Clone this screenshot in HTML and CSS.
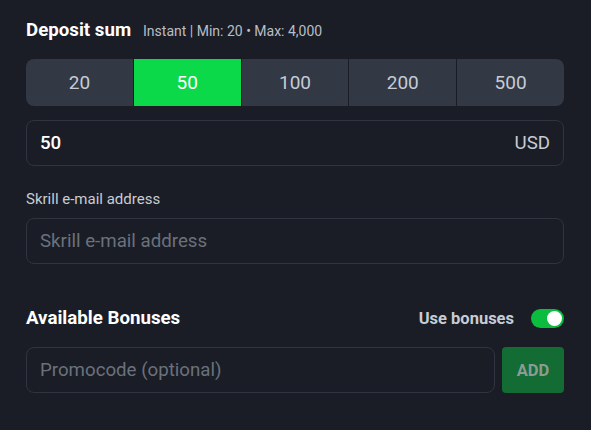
FILE: index.html
```html
<!DOCTYPE html>
<html>
<head>
<meta charset="utf-8">
<link rel="stylesheet" href="styles.css">
</head>
<body>
<div class="panel">
  <div class="head">
    <span class="title">Deposit sum</span>
    <span class="sub">Instant | Min: 20 • Max: 4,000</span>
  </div>
  <div class="amounts">
    <div class="amt">20</div>
    <div class="amt active">50</div>
    <div class="amt">100</div>
    <div class="amt">200</div>
    <div class="amt">500</div>
  </div>
  <div class="field sum">
    <span class="val">50</span>
    <span class="cur">USD</span>
  </div>
  <div class="label">Skrill e-mail address</div>
  <div class="field email">
    <span class="ph">Skrill e-mail address</span>
  </div>
  <div class="bonus-head">
    <span class="title">Available Bonuses</span>
    <div class="use">
      <span class="use-text">Use bonuses</span>
      <span class="toggle"><span class="knob"></span></span>
    </div>
  </div>
  <div class="promo-row">
    <div class="field promo"><span class="ph">Promocode (optional)</span></div>
    <div class="add">ADD</div>
  </div>
</div>
</body>
</html>
```

FILE: styles.css
```css
html, body {
  margin: 0;
  padding: 0;
  background: #1a1d25;
  font-family: Roboto, "Liberation Sans", sans-serif;
}
.panel {
  padding: 19px 27px 0 26px;
}
.head {
  display: flex;
  align-items: baseline;
  gap: 12px;
  height: 24px;
}
.title {
  color: #ffffff;
  font-weight: 700;
  font-size: 18.7px;
}
.sub {
  color: #b8bec8;
  font-size: 14px;
}
.amounts {
  margin-top: 16px;
  display: flex;
  gap: 1px;
  height: 47px;
  border-radius: 8px;
  overflow: hidden;
  background: #1a1d25;
}
.amt {
  flex: 1;
  background: #323844;
  color: #c6ccd6;
  font-size: 19px;
  display: flex;
  align-items: center;
  justify-content: center;
}
.amt.active {
  background: #0cd94a;
  color: #ffffff;
}
.field {
  box-sizing: border-box;
  height: 46px;
  border: 1px solid #2f3440;
  border-radius: 8px;
  display: flex;
  align-items: center;
  padding: 0 13px;
  background: #1a1d25;
}
.sum {
  margin-top: 14px;
  justify-content: space-between;
}
.val {
  color: #ffffff;
  font-size: 18.7px;
  font-weight: 500;
}
.cur {
  color: #c6ccd6;
  font-size: 18.7px;
}
.label {
  margin-top: 24px;
  color: #c8ccd4;
  font-size: 15px;
  height: 20px;
}
.email {
  margin-top: 8px;
}
.ph {
  color: #6b717c;
  font-size: 18.7px;
}
.bonus-head {
  margin-top: 43px;
  display: flex;
  justify-content: space-between;
  align-items: center;
  height: 22px;
}
.use {
  display: flex;
  align-items: center;
  gap: 17px;
}
.use-text {
  color: #c8ccd4;
  font-size: 16.5px;
  font-weight: 700;
}
.toggle {
  width: 33px;
  height: 19px;
  border-radius: 10px;
  background: #0cbc3f;
  position: relative;
  display: block;
}
.knob {
  position: absolute;
  right: 2px;
  top: 2px;
  width: 15px;
  height: 15px;
  border-radius: 50%;
  background: #ffffff;
}
.promo-row {
  margin-top: 18px;
  display: flex;
  gap: 7px;
}
.promo {
  flex: 1;
}
.add {
  width: 62px;
  height: 46px;
  border-radius: 4px;
  background: #126c33;
  color: #8e9b93;
  font-weight: 700;
  font-size: 16.5px;
  display: flex;
  align-items: center;
  justify-content: center;
}
```
